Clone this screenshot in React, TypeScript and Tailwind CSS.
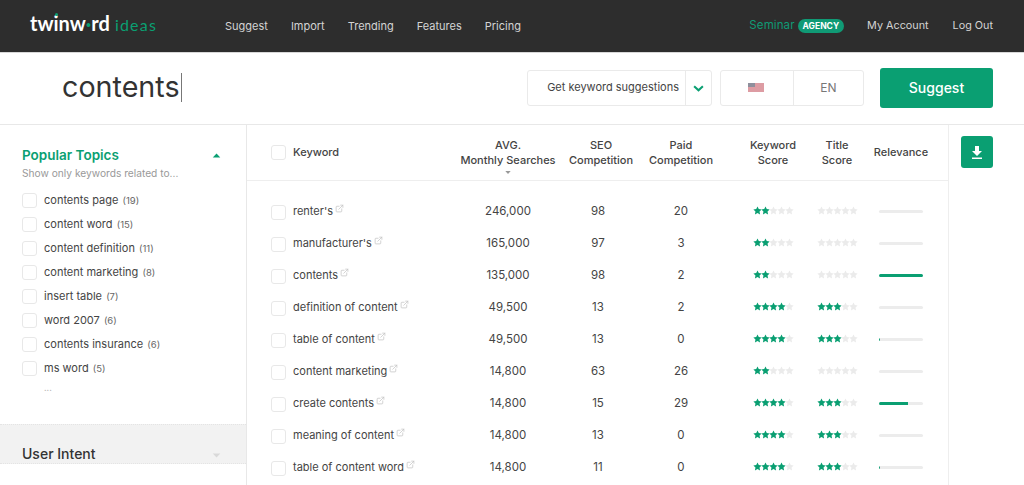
import { ExternalLink } from 'lucide-react';

const navLinks = ['Suggest', 'Import', 'Trending', 'Features', 'Pricing'];

const topics = [
  { label: 'contents page', count: 19 },
  { label: 'content word', count: 15 },
  { label: 'content definition', count: 11 },
  { label: 'content marketing', count: 8 },
  { label: 'insert table', count: 7 },
  { label: 'word 2007', count: 6 },
  { label: 'contents insurance', count: 6 },
  { label: 'ms word', count: 5 },
];

const rows = [
  { keyword: "renter's", searches: '246,000', seo: 98, paid: 20, score: 2, title: 0, relevance: 0 },
  { keyword: "manufacturer's", searches: '165,000', seo: 97, paid: 3, score: 2, title: 0, relevance: 0 },
  { keyword: 'contents', searches: '135,000', seo: 98, paid: 2, score: 2, title: 0, relevance: 100 },
  { keyword: 'definition of content', searches: '49,500', seo: 13, paid: 2, score: 4, title: 3, relevance: 0 },
  { keyword: 'table of content', searches: '49,500', seo: 13, paid: 0, score: 4, title: 3, relevance: 3 },
  { keyword: 'content marketing', searches: '14,800', seo: 63, paid: 26, score: 2, title: 0, relevance: 0 },
  { keyword: 'create contents', searches: '14,800', seo: 15, paid: 29, score: 4, title: 3, relevance: 66 },
  { keyword: 'meaning of content', searches: '14,800', seo: 13, paid: 0, score: 4, title: 3, relevance: 0 },
  { keyword: 'table of content word', searches: '14,800', seo: 11, paid: 0, score: 4, title: 3, relevance: 3 },
];

const gridCols = 'grid grid-cols-[22px_162px_106px_74px_92px_86px_48px_80px] items-center';

function Checkbox() {
  return <span className="block h-[15px] w-[15px] shrink-0 rounded-[3px] border border-[#e8e8e8] bg-white" />;
}

function Stars({ filled }: { filled: number }) {
  return (
    <div className="mb-[4px] flex justify-center">
      {[0, 1, 2, 3, 4].map((i) => (
        <svg key={i} viewBox="0 0 24 24" className={`-mx-[0.5px] h-[9px] w-[9px] ${i < filled ? 'fill-[#0a9f72]' : 'fill-[#ebebeb]'}`}>
          <path d="M12 1l3.400 7.200 7.600 1-5.600 5.400 1.500 8L12 18.700 5.100 22.600l1.500-8L1 9.200l7.600-1z" />
        </svg>
      ))}
    </div>
  );
}

function Triangle({ up, className }: { up?: boolean; className: string }) {
  return (
    <svg viewBox="0 0 10 6" className={className}>
      <path d={up ? 'M5 .5 9.500 5.500H.5z' : 'M.5.5h9L5 5.500z'} />
    </svg>
  );
}

export default function App() {
  return (
    <div className="flex h-[485px] w-[1024px] flex-col overflow-hidden bg-white font-['Inter',sans-serif] text-[#333]">
      {/* Top bar */}
      <header className="flex h-[53px] shrink-0 items-center border-b border-[#d8d8d8] bg-[#2d2d2d] pl-[30px] pr-[31px] text-[11px] text-[#d4d4d4]">
        <div className="mb-[6px] flex w-[195px] items-baseline font-['Lato',sans-serif]">
          <span className="text-[20px] font-bold leading-none text-white">
            tw
            <span className="relative">
              i
              <span className="absolute left-[1.500px] top-[2px] h-[3px] w-[3px] rounded-full bg-[#0a9f72]" />
            </span>
            nw<span className="text-[#0a9f72]">·</span>rd
          </span>
          <span className="ml-[5px] text-[16px] leading-none tracking-[1.200px] text-[#0a9f72]">ideas</span>
        </div>
        <nav className="flex gap-[23px]">
          {navLinks.map((link) => (
            <a key={link}>{link}</a>
          ))}
        </nav>
        <div className="ml-auto flex items-center">
          <a className="text-[11.500px] tracking-[0.1px] text-[#109a75]">Seminar</a>
          <span className="ml-[3px] rounded-full bg-[#109a75] px-[5px] text-[8.500px] font-bold leading-[14px] text-white">AGENCY</span>
          <a className="ml-[23px] text-[10.800px]">My Account</a>
          <a className="ml-[24px] text-[10.800px]">Log Out</a>
        </div>
      </header>

      {/* Search row */}
      <div className="flex h-[72px] shrink-0 items-center border-b border-[#e8e8e8] pb-[2px] pl-[62px] pr-[31px]">
        <div className="flex items-center text-[28.700px] leading-none text-[#333]">
          contents
          <span className="ml-[1.500px] h-[29px] w-px bg-[#777]" />
        </div>
        <div className="ml-auto flex h-[36px] w-[185px] items-stretch rounded-[3px] border border-[#eaeaea] text-[11px]">
          <span className="flex flex-1 items-center justify-end pr-[6px] text-[#444]">Get keyword suggestions</span>
          <span className="flex w-[26px] items-center justify-center border-l border-[#eaeaea] pt-[2px]">
            <svg viewBox="0 0 12 8" className="h-[7px] w-[11px] fill-none stroke-[#0a9f72] stroke-[2.400]">
              <path d="M1 1.500 6 6l5-4.500" />
            </svg>
          </span>
        </div>
        <div className="ml-[8px] flex h-[36px] w-[144px] items-stretch rounded-[3px] border border-[#eaeaea]">
          <span className="flex w-[73px] items-center justify-center border-r border-[#eaeaea] pr-[3px]">
            <svg viewBox="0 0 16 9" className="h-[9px] w-[16px]">
              <rect width="16" height="9" fill="#dd9ca3" />
              <rect width="7" height="4" fill="#8f8f9c" />
            </svg>
          </span>
          <span className="flex flex-1 items-center justify-center text-[12px] text-[#777]">EN</span>
        </div>
        <button className="ml-[16px] h-[40px] w-[113px] rounded-[3px] bg-[#0a9f72] text-[14px] font-medium text-white">Suggest</button>
      </div>

      <div className="flex min-h-0 flex-1">
        {/* Sidebar */}
        <aside className="flex w-[247px] shrink-0 flex-col border-r border-[#e8e8e8]">
          <div className="h-[299px] shrink-0 pl-[22px] pr-[25px] pt-[21px]">
            <div className="flex items-center justify-between">
              <h2 className="text-[13.500px] font-semibold leading-[18px] text-[#0a9f72]">Popular Topics</h2>
              <Triangle up className="h-[5px] w-[9px] fill-[#0a9f72]" />
            </div>
            <p className="mt-[1px] text-[10.200px] leading-[16px] text-[#999]">Show only keywords related to...</p>
            <ul className="mt-[7px]">
              {topics.map((topic) => (
                <li key={topic.label} className="flex h-[24px] items-center gap-[7px]">
                  <Checkbox />
                  <span className="text-[11px] text-[#444]">
                    {topic.label} <span className="ml-[1px] text-[9.500px] text-[#666]">({topic.count})</span>
                  </span>
                </li>
              ))}
            </ul>
            <p className="mt-[2px] pl-[22px] text-[9px] leading-[12px] text-[#bbb]">...</p>
          </div>
          <div className="flex h-[40px] shrink-0 items-end justify-between border-y border-dotted border-[#e4e4e4] bg-[#f2f2f2] pl-[22px] pr-[25px]">
            <h2 className="text-[14px] font-medium leading-[18px] text-[#333]">User Intent</h2>
            <Triangle className="mb-[5px] h-[5px] w-[9px] fill-[#d9d9d9]" />
          </div>
        </aside>

        {/* Keyword table */}
        <main className="flex w-[702px] shrink-0 flex-col border-r border-[#eeeeee]">
          <div className={`${gridCols} h-[56px] shrink-0 border-b border-[#eeeeee] pl-[24px] text-center text-[11px] font-medium leading-[14.500px] text-[#444]`}>
            <Checkbox />
            <span className="text-left">Keyword</span>
            <div className="pt-[8px]">
              AVG.
              <br />
              Monthly Searches
              <Triangle className="mx-auto mt-[3px] h-[5px] w-[6px] fill-[#999]" />
            </div>
            <span className="pl-[6px]">
              SEO
              <br />
              Competition
            </span>
            <span>
              Paid
              <br />
              Competition
            </span>
            <span className="pl-[6px]">
              Keyword
              <br />
              Score
            </span>
            <span>
              Title
              <br />
              Score
            </span>
            <span>Relevance</span>
          </div>
          <div className="pt-[15px]">
            {rows.map((row) => (
              <div key={row.keyword} className={`${gridCols} h-[32px] pl-[24px] text-center text-[11.500px] text-[#444]`}>
                <Checkbox />
                <span className="mb-[2px] flex items-start text-left text-[11px]">
                  {row.keyword}
                  <ExternalLink className="ml-[2px] mt-[1px] h-[9px] w-[9px] text-[#c4c4c4]" />
                </span>
                <span>{row.searches}</span>
                <span>{row.seo}</span>
                <span>{row.paid}</span>
                <div className="pl-[6px]">
                  <Stars filled={row.score} />
                </div>
                <Stars filled={row.title} />
                <div className="mx-auto mb-[2px] h-[3px] w-[44px] overflow-hidden rounded-full bg-[#ececec]">
                  <div className="h-full bg-[#0a9f72]" style={{ width: `${row.relevance}%` }} />
                </div>
              </div>
            ))}
          </div>
        </main>

        {/* Export */}
        <div className="flex-1 pl-[12px] pt-[11px]">
          <button className="flex h-[32px] w-[32px] items-center justify-center rounded-[3px] bg-[#0a9f72]">
            <svg viewBox="0 0 12 13" className="h-[13px] w-[12px] fill-white">
              <path d="M4 0h4v5h3L6 10 1 5h3zM1 11.500h10V13H1z" />
            </svg>
          </button>
        </div>
      </div>
    </div>
  );
}
